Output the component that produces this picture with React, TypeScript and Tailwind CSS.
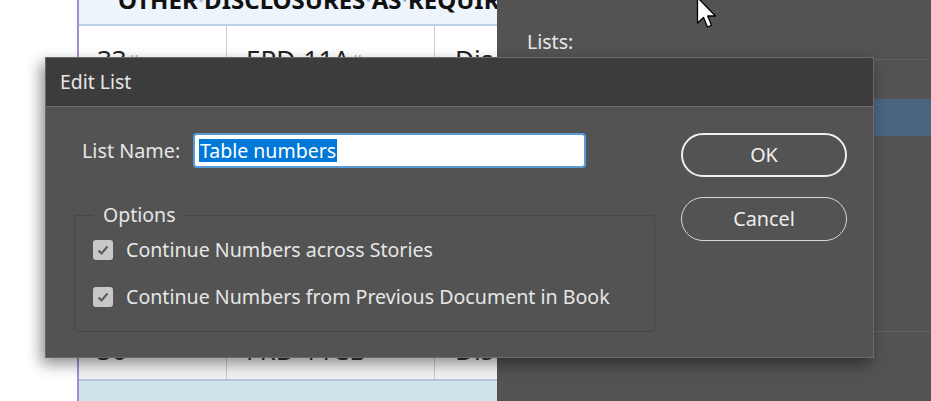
import React from 'react';

const Dot = () => <span className="text-[#9fb4d8] font-normal">·</span>;

const Checkbox: React.FC<{ label: string }> = ({ label }) => (
    <div className="flex items-center gap-[13px] h-[20px]">
        <div className="w-[20px] h-[20px] rounded-[3px] bg-[#c8c8c8] flex items-center justify-center">
            <svg width="14" height="14" viewBox="0 0 14 14">
                <path d="M2.5 7.5 L5.5 10.5 L11.5 3.5" fill="none" stroke="#5a5a5a" strokeWidth="2" />
            </svg>
        </div>
        <span className="text-[19.6px] text-[#e6e6e6] whitespace-nowrap">{label}</span>
    </div>
);

const App: React.FC = () => {
    return (
        <div
            className="relative w-[931px] h-[401px] overflow-hidden bg-white flex"
            style={{ fontFamily: '"Noto Sans", "Open Sans", sans-serif' }}
        >
            {/* page margin */}
            <div className="w-[77px] shrink-0 bg-white" />

            {/* table in the document */}
            <div className="w-[420px] shrink-0 flex flex-col border-l-2 border-[#a78bdb]">
                <div className="h-[26px] bg-[#eef4fb] border-b-2 border-[#bcd0e6] overflow-hidden flex items-end pl-[39px]">
                    <span className="text-[24px] font-bold text-[#111] leading-none whitespace-nowrap mb-[12px]">
                        OTHER<Dot />DISCLOSURES<Dot />AS<Dot />REQUIRED
                    </span>
                </div>
                <div className="h-[32px] flex bg-white">
                    <div className="w-[148px] border-r border-[#c3cde0] pl-[18px] pt-[20px] text-[26px] leading-none text-[#222]">
                        33<span className="text-[#9fb4d8] text-[20px]">#</span>
                    </div>
                    <div className="w-[208px] border-r border-[#c3cde0] pl-[19px] pt-[20px] text-[26px] leading-none text-[#222]">
                        EPD-11A<span className="text-[#9fb4d8] text-[20px]">#</span>
                    </div>
                    <div className="flex-1 pl-[20px] pt-[20px] text-[26px] leading-none text-[#222]">Dis</div>
                </div>
                <div className="flex-1" />
                <div className="h-[22px] flex bg-gradient-to-b from-white to-[#f1f1f1] overflow-hidden">
                    <div className="w-[148px] border-r border-[#c3cde0] pl-[18px] text-[26px] leading-none text-[#333] -mt-[20px]">36</div>
                    <div className="w-[208px] border-r border-[#c3cde0] pl-[19px] text-[26px] leading-none text-[#333] -mt-[20px]">FRD-11CB</div>
                    <div className="flex-1 pl-[20px] text-[26px] leading-none text-[#333] -mt-[20px]">Dis</div>
                </div>
                <div className="h-[22px] bg-[#cfe3ea] border-t-2 border-[#b6c6dc]" />
            </div>

            {/* right-hand panel */}
            <div className="flex-1 bg-[#535353] flex flex-col">
                <div className="h-[60px] pl-[30px] pt-[29px] text-[19.5px] leading-[26px] text-[#e8e8e8] border-b border-[#5e5e5e]">Lists:</div>
                <div className="h-[39px]" />
                <div className="h-[37px] bg-[#4a6580]" />
                <div className="h-[195px]" />
                <div className="h-px bg-[#626262]" />
            </div>

            {/* Edit List dialog */}
            <div className="absolute left-[45px] top-[57px] w-[829px] h-[301px] border border-[#6a6a6a] bg-[#535353] shadow-[-4px_6px_14px_rgba(0,0,0,0.45)] flex flex-col text-[#e6e6e6]">
                <div className="h-[49px] bg-[#3c3c3c] border-b border-[#6a6a6a] flex items-center pl-[14px] text-[19.4px]">
                    Edit List
                </div>
                <div className="flex-1 flex">
                    <div className="w-[635px] flex flex-col">
                        <div className="flex items-center mt-[26px] ml-[36px] h-[35px]">
                            <span className="text-[19.8px] w-[111px] whitespace-nowrap">List Name:</span>
                            <div className="w-[393px] h-[35px] bg-white border-2 border-[#5b9bd5] rounded-[4px] flex items-center pl-[4px]">
                                <span className="bg-[#0078d7] text-white text-[19.5px] leading-[23px] px-[1px]">Table numbers</span>
                            </div>
                        </div>
                        <fieldset className="ml-[28px] mt-[36px] w-[581px] h-[128px] border border-[#474747] rounded-[3px] px-[18px]">
                            <legend className="px-[10px] text-[19.5px] leading-[22px]">Options</legend>
                            <div className="flex flex-col gap-[27px] mt-[14px]">
                                <Checkbox label="Continue Numbers across Stories" />
                                <Checkbox label="Continue Numbers from Previous Document in Book" />
                            </div>
                        </fieldset>
                    </div>
                    <div className="flex flex-col gap-[20px] mt-[26px]">
                        <button className="w-[166px] h-[44px] rounded-full border-[2.5px] border-[#f0f0f0] text-[19.8px] text-[#f0f0f0]">
                            OK
                        </button>
                        <button className="w-[166px] h-[44px] rounded-full border-[1.5px] border-[#d8d8d8] text-[19.8px] text-[#ececec]">
                            Cancel
                        </button>
                    </div>
                </div>
            </div>

            {/* mouse pointer */}
            <svg className="absolute left-[696px] top-[-4px]" width="26" height="36" viewBox="0 0 26 36">
                <path d="M1.5 1.5 L1.5 27 L7.5 21.5 L11.5 31 L15.5 29.3 L11.7 20 L19.5 20 Z" fill="white" stroke="black" strokeWidth="1.3" strokeLinejoin="round" />
            </svg>
        </div>
    );
};

export default App;
